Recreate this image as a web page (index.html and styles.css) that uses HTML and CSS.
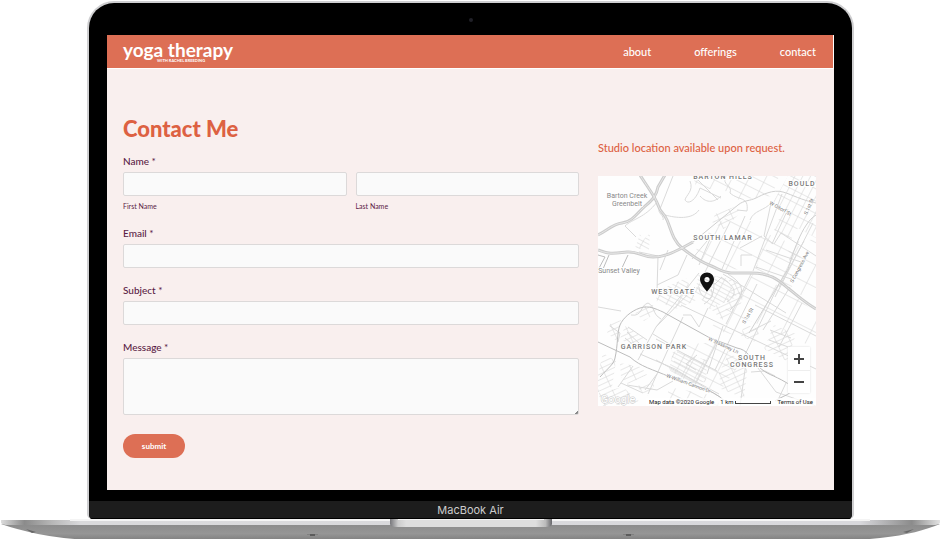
FILE: index.html
```html
<!DOCTYPE html>
<html lang="en">
<head>
<meta charset="utf-8">
<meta name="viewport" content="width=device-width, initial-scale=1">
<title>Contact | Yoga Therapy</title>
<link rel="stylesheet" href="styles.css">
</head>
<body>
<div class="laptop">
  <div class="lid">
    <div class="bezel"><span class="camera"></span></div>
    <div class="screen">
      <header class="site-header">
        <a class="logo" href="#">yoga therapy<span class="tagline">WITH RACHEL BREEDING</span></a>
        <nav class="nav">
          <a href="#">about</a>
          <a href="#">offerings</a>
          <a href="#">contact</a>
        </nav>
      </header>
      <main class="content">
        <form class="form">
          <h1>Contact Me</h1>
          <fieldset class="field">
            <legend class="label">Name *</legend>
            <div class="names">
              <div class="name"><input id="first" type="text"><label for="first">First Name</label></div>
              <div class="name"><input id="last" type="text"><label for="last">Last Name</label></div>
            </div>
          </fieldset>
          <div class="field"><label class="label" for="email">Email *</label><input id="email" type="email"></div>
          <div class="field"><label class="label" for="subject">Subject *</label><input id="subject" type="text"></div>
          <div class="field"><label class="label" for="message">Message *</label><textarea id="message"></textarea></div>
          <button class="submit" type="button">submit</button>
        </form>
        <aside class="studio">
          <p>Studio location available upon request.</p>
          <div class="map">
            <svg class="map-art" viewBox="0 0 218 230">
              <defs>
                <pattern id="ga" width="7" height="11" patternUnits="userSpaceOnUse" patternTransform="rotate(27)"><path d="M0 0H7M0 0V11"/></pattern>
                <pattern id="gb" width="15" height="10" patternUnits="userSpaceOnUse" patternTransform="rotate(27)"><path d="M0 0H15M0 0V10"/></pattern>
                <pattern id="gc" width="13" height="5" patternUnits="userSpaceOnUse" patternTransform="rotate(-25)"><path d="M0 0H13M0 0V5"/></pattern>
                <pattern id="gd" width="10" height="4" patternUnits="userSpaceOnUse" patternTransform="rotate(28)"><path d="M0 0H10M0 0V4"/></pattern>
                <pattern id="ge" width="26" height="20" patternUnits="userSpaceOnUse" patternTransform="rotate(27)"><path d="M0 0H26M0 0V20"/></pattern>
              </defs>
              <rect width="218" height="230" fill="#fefefe"/>
              <g class="blocks">
                <path fill="url(#ga)" d="M190 0H218V62L200 52L193 64L176 54L184 36L174 28Z"/>
                <path fill="url(#gb)" d="M95 0H181L174 20L141 24L120 10L100 17Z"/>
                <path fill="url(#gc)" d="M117 38L139 30L142 37L126 53L114 46Z"/>
                <path fill="url(#gb)" d="M170 58L205 72L194 111L169 101L156 92Z"/>
                <path fill="url(#ge)" d="M102 64L139 32L152 45L160 92L128 94L96 80ZM152 45L174 48L158 92ZM190 67L218 63V128L193 113ZM155 98L188 113L218 137V172L150 144L141 160L112 153Z"/>
                <path fill="url(#gd)" d="M101 97L128 102L139 121L112 133L97 116ZM45 64L52 57L51 74L37 72L42 58ZM57 116L88 102L98 124L80 133L59 126ZM75 175L109 184L108 206L92 207L71 194Z"/>
                <path fill="url(#gc)" d="M130 100L148 113L142 130L124 144L112 132L134 120ZM12 148L23 144L20 166L9 157ZM27 150L46 162L38 172L22 163ZM5 177L18 185L14 211L0 216V198ZM35 135L53 126L59 136L46 145ZM131 177L150 188L146 222L123 213L121 197Z"/>
                <path fill="url(#gc)" d="M176 149L198 158L189 185L166 173ZM146 148L162 154L157 166L143 160ZM22 187L43 191L49 199L30 208L23 201ZM37 210L58 207L49 220ZM0 217L25 211L43 227L5 230Z"/>
                <path fill="url(#gb)" d="M82 169L119 166L144 185L122 215L92 206L72 195ZM70 211L118 220L122 230H70Z"/>
              </g>
              <g class="streets">
                <path d="M92 5C96 15 88 19 87 24C91 30 99 22 102 12L123 22M128 0C123 9 135 9 132 17C141 25 151 20 149 35L139 34M152 44C156 34 166 35 173 27L166 60L175 68M101 34C94 44 78 42 67 39M38 61L27 50C34 43 47 42 59 26M75 0L62 33C58 36 67 40 65 44M0 131L23 135M58 151L101 97M40 184L58 151L97 111M59 115L60 80L41 76M89 79L80 99L59 109M70 74L62 94M96 64L114 59L94 83M112 63L101 89M132 46L107 96M147 40L124 93M154 79H143V90M164 60L142 72M184 18L155 95M159 108L117 194M153 98L128 148M181 108L144 185M192 111L165 154M204 127L181 171M157 129L218 160M83 129L218 193M125 98L188 137M85 141L72 169L50 218M125 150L109 198M119 166L97 209M78 172L55 158M58 163L119 195M58 184L121 218M42 178L77 193L122 221M20 211L35 190M29 209L59 214L75 205M148 187L142 230M160 192L178 216L218 230M188 207L179 226M153 196L167 195L177 200M176 68L183 57L218 80M168 74L203 86M158 91L196 104M215 47L177 121M190 33L174 68M206 65L181 111M110 132L101 151L93 139L85 139"/>
                <path d="M101 111C101 123 119 129 113 113M102 101L117 108L124 101M107 98C119 99 119 121 106 128M123 101C134 109 143 116 129 126M130 98C144 107 151 116 132 134M102 20C109 28 117 26 123 20M100 4L120 24M33 139C45 141 42 129 50 127C57 130 54 138 63 143M30 151L49 164M29 156L42 168M27 162L39 172M12 150L22 157L20 166M23 207L45 217M59 198L47 214M99 179L88 188L98 194M153 155L173 145M171 164L193 172M172 154L193 162"/>
              </g>
              <g class="roads">
                <path class="wide" d="M0 59C10 54 15 48 24 47S38 39 44 33S58 23 60 11L67-1"/>
                <path class="wide" d="M42-1C48 9 57 20 60 29S65 35 69 44S75 65 84 72S101 85 111 89S124 96 133 97H153C176 97 183 107 191 113S205 125 218 133"/>
                <path class="wide" d="M0 74C12 79 18 77 29 76S44 81 55 81S74 77 84 72L95 66"/>
                <path class="hair" d="M0 59C10 54 15 48 24 47S38 39 44 33S58 23 60 11L67-1M42-1C48 9 57 20 60 29S65 35 69 44S75 65 84 72S101 85 111 89S124 96 133 97H153C176 97 183 107 191 113S205 125 218 133M0 74C12 79 18 77 29 76S44 81 55 81S74 77 84 72L95 66"/>
                <path class="minor" d="M95 66L140 29C146 24 152 25 158 22S175 13 185 16S203 24 218 27M218 39C204 47 194 80 190 93L176 116L151 157"/>
                <path d="M2 201C11 191 16 188 17 182C20 169 19 156 22 149S33 135 42 132S58 133 65 136L112 162L139 172C150 174 151 181 160 190S174 198 189 207S183 220 177 225"/>
                <path d="M0 166L32 181C43 191 54 193 72 201S104 209 122 221L130 228M0 79L7 81L0 94M11 79L5 93M30 79L23 94"/>
              </g>
              <g class="district">
                <text x="125" y="3">BARTON HILLS</text>
                <text x="204" y="10">BOULD</text>
                <text x="125" y="64">SOUTH LAMAR</text>
                <text x="75" y="118">WESTGATE</text>
                <text x="56" y="173">GARRISON PARK</text>
                <text x="154" y="184">SOUTH</text>
                <text x="154" y="191">CONGRESS</text>
              </g>
              <g class="place">
                <text x="29" y="22">Barton Creek</text>
                <text x="29" y="30">Greenbelt</text>
                <text x="21" y="97">Sunset Valley</text>
                <text class="brand" x="20" y="227">Google</text>
              </g>
              <g class="street-name">
                <text transform="translate(171 28) rotate(29)">W Oltorf St</text>
                <text transform="translate(209 39) rotate(-66)">S 1st St</text>
                <text transform="translate(195 107) rotate(-62)">S Congress Ave</text>
                <text transform="translate(147 148) rotate(-60)">S 1st St</text>
                <text transform="translate(110 164) rotate(25)">W Stassney Ln</text>
                <text transform="translate(68 201) rotate(20)">W William Cannon Dr</text>
              </g>
              <path class="pin" fill-rule="evenodd" d="M109 96.500C105 96.500 102 99.500 102 103.500C102 108 109 115.500 109 115.500S116 108 116 103.500C116 99.500 113 96.500 109 96.500ZM109 101A2.600 2.600 0 1 1 109 106.200A2.600 2.600 0 1 1 109 101Z"/>
            </svg>
            <div class="zoom">
              <button type="button" aria-label="Zoom in"><svg viewBox="0 0 12 12"><path d="M6 1V11M1 6H11"/></svg></button>
              <button type="button" aria-label="Zoom out"><svg viewBox="0 0 12 12"><path d="M1 6H11"/></svg></button>
            </div>
            <div class="map-footer">
              <span>Map data ©2020 Google</span>
              <span class="scale">1 km <i></i></span>
              <a href="#">Terms of Use</a>
            </div>
          </div>
        </aside>
      </main>
    </div>
    <div class="chin">MacBook Air</div>
  </div>
  <svg class="base" viewBox="0 0 941 21" preserveAspectRatio="none">
    <defs>
      <linearGradient id="edge"><stop offset="0" stop-color="#ddd"/><stop offset=".025" stop-color="#8b8b8b"/><stop offset=".055" stop-color="#b8b8b8"/><stop offset=".085" stop-color="#dadadc"/><stop offset=".915" stop-color="#d8d8dc"/><stop offset=".97" stop-color="#8b8b8b"/><stop offset="1" stop-color="#e3e3e3"/></linearGradient>
      <linearGradient id="body" x2="0" y2="1"><stop stop-color="#8b8b8b"/><stop offset=".6" stop-color="#969696"/><stop offset="1" stop-color="#808080"/></linearGradient>
      <linearGradient id="notch"><stop stop-color="#77777b"/><stop offset=".05" stop-color="#ccc"/><stop offset=".1" stop-color="#dedede"/><stop offset=".9" stop-color="#dedede"/><stop offset=".96" stop-color="#bbb"/><stop offset="1" stop-color="#67676b"/></linearGradient>
    </defs>
    <path fill="url(#body)" d="M1 5H940C925 11 908 16 880 19Q864 21 850 21H91Q63 20 38 15Q15 10 1 5Z"/>
    <path fill="url(#edge)" d="M1 1H940V4Q938 6 933 6H8Q3 6 1 4Z"/>
    <path fill="#f4f4f4" d="M70 0H870V2H70Z"/>
    <path fill="url(#notch)" d="M390 0H552V5Q552 8 545 8H397Q390 8 390 5Z"/>
    <path fill="#f4f4f4" d="M398 0H544V1H398Z"/>
    <path fill="#666" d="M26 10L36 13L32 14ZM914 10L903 13L907 14Z"/>
    <path fill="#808080" d="M307 15H318V16H307ZM623 15H634V16H623Z"/>
    <path fill="#5c5c5c" d="M310 15H315V17H310ZM626 15H631V17H626Z"/>
  </svg>
</div>
</body>
</html>
```
FILE: styles.css
```css
* { box-sizing: border-box; }
body { margin: 0; background: #fff; color: #5b1c45; font-family: Lato, "Liberation Sans", sans-serif; }
a { color: inherit; text-decoration: none; }
.laptop { padding-top: 1px; overflow: hidden; }
.lid { margin: 0 87px; border: 2px solid #cfcfd1; border-bottom: 0; border-radius: 27px 27px 5px 5px; background: #000; overflow: hidden; }
.bezel { height: 32px; padding-top: 15px; }
.camera { display: block; width: 4px; height: 4px; margin: 0 auto; border-radius: 50%; background: #202028; }
.screen { margin: 0 18px; background: #f9efee; }
.site-header { display: flex; align-items: center; justify-content: space-between; height: 34px; padding: 0 17px 0 16px; background: #dd6f55; color: #fff; border-right: 1px solid #fff; border-bottom: 1px solid #fff; }
.logo { display: flex; position: relative; padding-bottom: 4px; font-size: 19px; line-height: 24px; font-weight: 700; }
.tagline { position: absolute; left: 34px; top: 20px; font-size: 4px; line-height: 5px; white-space: nowrap; }
.nav { display: flex; gap: 43px; font-size: 11px; line-height: 16px; font-weight: 500; }
.content { display: grid; grid-template-columns: minmax(0, 456fr) minmax(0, 218fr); gap: 19px; padding: 46px 18px 32px 16px; }
h1 { margin: 0 0 11px; font-size: 22px; line-height: 28px; font-weight: 900; color: #dd6142; }
.field { margin: 0 0 15px; padding: 0; border: 0; }
.label { display: block; margin: 0 0 4px; padding: 0; font-size: 10px; line-height: 14px; font-weight: 500; }
input, textarea { display: block; width: 100%; height: 24px; margin: 0; padding: 4px 6px; border: 1px solid #dcd9d9; border-radius: 2px; background: #fafafa; font: inherit; font-size: 10px; }
textarea { height: 57px; resize: none; background: linear-gradient(135deg, #fafafa 50%, #888 50%) right bottom / 3px 3px no-repeat #fafafa; }
.names { display: grid; grid-template-columns: 1fr 1fr; gap: 9px; }
.name label { display: block; margin-top: 5px; font-size: 7px; line-height: 10px; }
.submit { display: block; margin-top: 19px; width: 62px; height: 24px; padding: 0; border: 0; border-radius: 12px; background: #dd6f55; color: #fff; font: 700 8px/24px Lato, sans-serif; }
.studio p { margin: 25px 0 20px; font-size: 11px; line-height: 16px; font-weight: 500; color: #dd6142; white-space: nowrap; }
.map { position: relative; font-family: Roboto, sans-serif; }
.map-art { display: block; width: 100%; }
.map-art pattern path { fill: none; stroke: #d2d2d2; stroke-width: 1; }
.streets { fill: none; stroke: #dadada; stroke-width: 1; }
.roads { fill: none; stroke: #bdbdbd; stroke-width: 1; }
.roads .minor { stroke: #d0d0d0; }
.roads .wide { stroke: #cccccc; stroke-width: 3; }
.roads .hair { stroke: #e7e7e7; stroke-width: 1; }
.district, .place, .street-name { fill: #777; stroke: #fff; stroke-width: 2; paint-order: stroke; text-anchor: middle; }
.district { font-size: 7px; font-weight: 500; letter-spacing: 1px; }
.place { font-size: 7px; fill: #888; }
.place .brand { font-size: 11px; fill: #fff; stroke: #ccc; stroke-width: 1; }
.street-name { font-size: 5px; stroke-width: 1; text-anchor: start; }
.pin { fill: #111; }
.zoom { position: absolute; right: 6px; bottom: 13px; width: 22px; background: #fff; box-shadow: 0 0 2px #ddd; }
.zoom button { display: flex; align-items: center; justify-content: center; width: 100%; height: 23px; padding: 0; border: 0; background: none; }
.zoom button + button { border-top: 1px solid #eee; }
.zoom svg { width: 12px; height: 12px; fill: none; stroke: #444; stroke-width: 2; }
.map-footer { position: absolute; right: 0; bottom: 0; display: flex; gap: 6px; padding: 0 3px; background: rgba(255, 255, 255, .75); font-size: 6px; line-height: 8px; color: #222; white-space: nowrap; }
.scale { display: flex; gap: 2px; }
.scale i { width: 36px; height: 3px; margin-top: 3px; border: 1px solid #444; border-top: 0; }
.chin { margin-top: 11px; height: 18px; background: #1d1d1d; border-bottom: 1px solid #000; color: #ccc; font: 11px/18px Inter, sans-serif; text-align: center; }
.base { display: block; width: 100%; height: 21px; }
```
